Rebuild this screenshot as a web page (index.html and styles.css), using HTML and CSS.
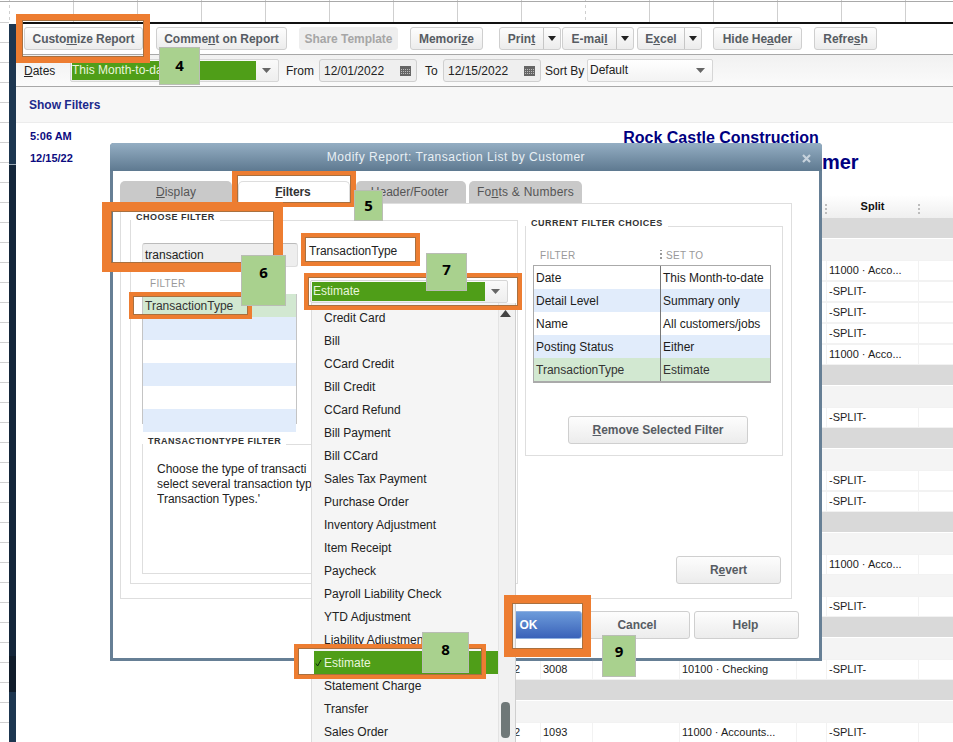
FILE: index.html
```html
<!DOCTYPE html>
<html lang="en">
<head>
<meta charset="utf-8">
<title>Modify Report: Transaction List by Customer</title>
<link rel="stylesheet" href="styles.css">
</head>
<body>
<div class="desktop">
  <div class="sheet-top"></div>
  <div class="workspace">
    <div class="sheet-left"><span class="sheet-mark"></span></div>
    <div class="rail">
      <span class="rail-a"></span><span class="rail-b"></span><span class="rail-c"></span><span class="rail-d"></span>
    </div>
    <main class="report-window">
      <div class="toolbar">
        <button class="btn w-customize">Custo<u>m</u>ize Report</button>
        <button class="btn w-comment">Comme<u>n</u>t on Report</button>
        <button class="btn btn-off w-share">Share Template</button>
        <button class="btn w-memorize">Memori<u>z</u>e</button>
        <div class="split w-print"><span class="split-label">Prin<u>t</u></span><span class="split-arrow"><svg width="8" height="5" viewBox="0 0 8 5"><path d="M0 0h8L4 5z" fill="#222"/></svg></span></div>
        <div class="split w-email"><span class="split-label">E-mai<u>l</u></span><span class="split-arrow"><svg width="8" height="5" viewBox="0 0 8 5"><path d="M0 0h8L4 5z" fill="#222"/></svg></span></div>
        <div class="split w-excel"><span class="split-label">E<u>x</u>cel</span><span class="split-arrow"><svg width="8" height="5" viewBox="0 0 8 5"><path d="M0 0h8L4 5z" fill="#222"/></svg></span></div>
        <button class="btn w-hide">Hide He<u>a</u>der</button>
        <button class="btn w-refresh">Refre<u>s</u>h</button>
      </div>
      <div class="datebar">
        <span class="lbl lbl-dates"><u>D</u>ates</span>
        <div class="select w-dates"><span class="select-value is-green">This Month-to-date</span><svg class="caret" width="9" height="5" viewBox="0 0 9 5"><path d="M0 0h9L4.500 5z" fill="#666"/></svg></div>
        <span class="lbl lbl-from">From</span>
        <div class="date">12/01/2022<svg class="cal" width="11" height="10" viewBox="0 0 11 10"><rect width="11" height="10" fill="#666"/><path d="M1 3h1v1H1zM3 3h1v1H3zM5 3h1v1H5zM7 3h1v1H7zM9 3h1v1H9zM1 5h1v1H1zM3 5h1v1H3zM5 5h1v1H5zM7 5h1v1H7zM9 5h1v1H9zM1 7h1v1H1zM3 7h1v1H3zM5 7h1v1H5zM7 7h1v1H7zM9 7h1v1H9z" fill="#bbb"/></svg></div>
        <span class="lbl lbl-to">To</span>
        <div class="date">12/15/2022<svg class="cal" width="11" height="10" viewBox="0 0 11 10"><rect width="11" height="10" fill="#666"/><path d="M1 3h1v1H1zM3 3h1v1H3zM5 3h1v1H5zM7 3h1v1H7zM9 3h1v1H9zM1 5h1v1H1zM3 5h1v1H3zM5 5h1v1H5zM7 5h1v1H7zM9 5h1v1H9zM1 7h1v1H1zM3 7h1v1H3zM5 7h1v1H5zM7 7h1v1H7zM9 7h1v1H9z" fill="#bbb"/></svg></div>
        <span class="lbl lbl-sort">Sort By</span>
        <div class="select w-sort"><span class="select-value">Default</span><svg class="caret" width="9" height="5" viewBox="0 0 9 5"><path d="M0 0h9L4.500 5z" fill="#666"/></svg></div>
      </div>
      <div class="filterbar">Show Filters</div>
      <section class="report">
        <div class="report-head">
          <div class="meta"><div>5:06 AM</div><div>12/15/22</div></div>
          <div class="report-title">
            <div class="company">Rock Castle Construction</div>
            <div class="title-name">Transaction List by Customer</div>
          </div>
        </div>
        <div class="rows">
          <div class="grid-row head"><span></span><span></span><span></span><span></span><span></span><span class="col-split">Split</span><span></span></div>
          <div class="band-gray"></div>
          <div class="band-light"></div>
          <div class="grid-row cells"><span></span><span></span><span></span><span></span><span></span><span>11000 · Acco...</span><span></span></div>
          <div class="grid-row cells"><span></span><span></span><span></span><span></span><span></span><span>-SPLIT-</span><span></span></div>
          <div class="grid-row cells"><span></span><span></span><span></span><span></span><span></span><span>-SPLIT-</span><span></span></div>
          <div class="grid-row cells"><span></span><span></span><span></span><span></span><span></span><span>-SPLIT-</span><span></span></div>
          <div class="grid-row cells"><span></span><span></span><span></span><span></span><span></span><span>11000 · Acco...</span><span></span></div>
          <div class="band-gray"></div>
          <div class="band-light"></div>
          <div class="grid-row cells"><span></span><span></span><span></span><span></span><span></span><span>-SPLIT-</span><span></span></div>
          <div class="band-gray"></div>
          <div class="band-light"></div>
          <div class="grid-row cells"><span></span><span></span><span></span><span></span><span></span><span>-SPLIT-</span><span></span></div>
          <div class="grid-row cells"><span></span><span></span><span></span><span></span><span></span><span>-SPLIT-</span><span></span></div>
          <div class="band-gray"></div>
          <div class="band-light"></div>
          <div class="grid-row cells"><span></span><span></span><span></span><span></span><span></span><span>11000 · Acco...</span><span></span></div>
          <div class="band-light"></div>
          <div class="grid-row cells"><span></span><span></span><span></span><span></span><span></span><span>-SPLIT-</span><span></span></div>
          <div class="band-gray"></div>
          <div class="band-light"></div>
          <div class="grid-row cells"><span class="col-date">2</span><span>3008</span><span></span><span>10100 · Checking</span><span></span><span>-SPLIT-</span><span></span></div>
          <div class="band-gray"></div>
          <div class="band-light"></div>
          <div class="grid-row cells"><span class="col-date">2</span><span>1093</span><span></span><span>11000 · Accounts...</span><span></span><span>-SPLIT-</span><span></span></div>
        </div>
      </section>
    </main>
  </div>

  <div class="dialog">
    <div class="dialog-title">
      <span class="dialog-title-text">Modify Report: Transaction List by Customer</span>
      <svg class="dialog-close" width="9" height="9" viewBox="0 0 9 9"><path d="M1 1l7 7M8 1L1 8" stroke="#c6d2dc" stroke-width="2.200"/></svg>
    </div>
    <div class="dialog-body">
      <div class="tabs">
        <div class="tab tab-display"><u>D</u>isplay</div>
        <div class="tab tab-filters"><u>F</u>ilters</div>
        <div class="tab tab-header">Header/Footer</div>
        <div class="tab tab-fonts">Fo<u>n</u>ts &amp; Numbers</div>
      </div>
      <div class="panel">
        <div class="group group-choose">
          <div class="legend">CHOOSE FILTER</div>
          <div class="choose-grid">
            <div class="choose-left">
              <div class="search">transaction</div>
              <div class="col-caption caption-filter">FILTER</div>
              <div class="filter-list">
                <div class="fl-row fl-sel">TransactionType</div>
                <div class="fl-row fl-blue"></div>
                <div class="fl-row"></div>
                <div class="fl-row fl-blue"></div>
                <div class="fl-row"></div>
                <div class="fl-row fl-blue"></div>
              </div>
            </div>
            <div class="choose-right">
              <div class="type-label">TransactionType</div>
              <div class="select w-type"><span class="select-value is-green">Estimate</span><svg class="caret" width="9" height="5" viewBox="0 0 9 5"><path d="M0 0h9L4.500 5z" fill="#666"/></svg></div>
            </div>
          </div>
          <div class="group group-help">
            <div class="legend">TRANSACTIONTYPE FILTER</div>
            <p class="help-text">Choose the type of transacti<br>select several transaction typ<br>Transaction Types.'</p>
          </div>
        </div>
        <div class="panel-right">
          <div class="group group-current">
            <div class="legend">CURRENT FILTER CHOICES</div>
            <div class="current-caption"><span class="col-caption cc-filter">FILTER</span><span class="col-caption cc-set">SET TO</span></div>
            <div class="current-table">
              <span>Date</span><span>This Month-to-date</span>
              <span class="ct-blue">Detail Level</span><span class="ct-blue">Summary only</span>
              <span>Name</span><span>All customers/jobs</span>
              <span class="ct-blue">Posting Status</span><span class="ct-blue">Either</span>
              <span class="ct-sel">TransactionType</span><span class="ct-sel">Estimate</span>
            </div>
            <button class="btn btn-tall w-remove"><u>R</u>emove Selected Filter</button>
          </div>
          <button class="btn btn-tall w-revert">R<u>e</u>vert</button>
        </div>
      </div>
      <div class="dialog-foot">
        <button class="btn btn-tall btn-primary w-ok">OK</button>
        <button class="btn btn-tall w-cancel">Cancel</button>
        <button class="btn btn-tall w-help">Help</button>
      </div>
    </div>
  </div>

  <div class="dropdown">
    <ul class="dropdown-list">
      <li>Credit Card</li>
      <li>Bill</li>
      <li>CCard Credit</li>
      <li>Bill Credit</li>
      <li>CCard Refund</li>
      <li>Bill Payment</li>
      <li>Bill CCard</li>
      <li>Sales Tax Payment</li>
      <li>Purchase Order</li>
      <li>Inventory Adjustment</li>
      <li>Item Receipt</li>
      <li>Paycheck</li>
      <li>Payroll Liability Check</li>
      <li>YTD Adjustment</li>
      <li>Liability Adjustment</li>
      <li class="dd-sel"><svg class="dd-check" width="7" height="8" viewBox="0 0 7 8"><path d="M1 4.500L2.600 7 6 1" fill="none" stroke="#10300a" stroke-width="1"/></svg>Estimate</li>
      <li>Statement Charge</li>
      <li>Transfer</li>
      <li>Sales Order</li>
    </ul>
    <div class="dd-scroll">
      <svg class="dd-up" width="11" height="7" viewBox="0 0 11 7"><path d="M0 7h11L5.500 0z" fill="#444"/></svg>
      <span class="dd-thumb"></span>
    </div>
  </div>

  <div class="callout c-customize"></div>
  <div class="callout c-filters"></div>
  <div class="callout c-choose"></div>
  <div class="callout c-label"></div>
  <div class="callout c-type"></div>
  <div class="callout c-row"></div>
  <div class="callout c-estimate"></div>
  <div class="callout c-ok"></div>

  <div class="step s4">4</div>
  <div class="step s5">5</div>
  <div class="step s6">6</div>
  <div class="step s7">7</div>
  <div class="step s8">8</div>
  <div class="step s9">9</div>
</div>
</body>
</html>
```

FILE: styles.css
```css
* { box-sizing: border-box; }
html, body { margin: 0; padding: 0; }
body { font-family: "Liberation Sans", Arial, sans-serif; font-size: 12px; color: #1c1c1c; background: #fff; }
u { text-decoration: underline; }

.desktop { position: relative; width: 953px; height: 742px; overflow: hidden; display: flex; flex-direction: column; }

/* spreadsheet behind the app */
.sheet-top {
  height: 22px; flex: none;
  background:
    repeating-linear-gradient(#fff 0 3px, transparent 3px 6px) 585px 2px / 1px 20px no-repeat,
    repeating-linear-gradient(#fff 0 3px, transparent 3px 6px) 9px 2px / 1px 20px no-repeat,
    linear-gradient(#a9a9a9, #a9a9a9) 0 1px / 100% 1px no-repeat,
    linear-gradient(90deg, #cfcfcf 1px, transparent 1px) 9px 0 / 64px 100%;
}
.workspace { flex: 1; display: flex; min-height: 0; }
.sheet-left {
  width: 9px; flex: none; padding-top: 175px;
  background: linear-gradient(#d0d0d0 1px, transparent 1px) 0 20px / 100% 20px;
}
.sheet-mark { display: block; width: 2px; height: 40px; margin-left: 10px; background: #9a9a9a; }
.rail { width: 7px; flex: none; margin-top: 2px; display: flex; flex-direction: column; background: #15253a; }
.rail-a { height: 141px; background: #1d3650; border-bottom: 1px solid #9aa7b3; }
.rail-b { flex: 1; background: #14263a; }
.rail-c { height: 36px; background: #101c2a; }
.rail-d { height: 50px; background: #1d3650; }

.report-window { flex: 1; min-width: 0; display: flex; flex-direction: column; border-top: 2px solid #111; background: #fff; }

/* toolbar */
.toolbar { height: 31px; flex: none; display: flex; align-items: flex-start; padding: 3px 0 0 8px; background: #fff; border-bottom: 1px solid #a8a8a8; }
.btn {
  height: 23px; padding: 0; border: 1px solid #cfcfcf; border-radius: 3px;
  background: linear-gradient(#fdfdfd, #ececec);
  font: bold 12px "Liberation Sans", Arial, sans-serif; letter-spacing: -.05px; color: #575c63; white-space: nowrap;
}
.btn-off { border-color: #eee; background: #eeeeee; color: #a6a6a6; }
.btn-tall { height: 28px; }
.w-customize { width: 119px; }
.w-comment { width: 131px; margin-left: 13px; }
.w-share { width: 99px; margin-left: 12px; }
.w-memorize { width: 73px; margin-left: 12px; }
.w-hide { width: 89px; margin-left: 11px; }
.w-refresh { width: 63px; margin-left: 12px; }
.split { height: 23px; display: flex; border: 1px solid #cfcfcf; border-radius: 3px; background: linear-gradient(#fdfdfd, #ececec); font-weight: bold; color: #575c63; }
.split-label { flex: 1; text-align: center; line-height: 22px; }
.split-arrow { width: 17px; border-left: 1px solid #c6c6c6; display: flex; align-items: center; justify-content: center; }
.w-print { width: 62px; margin-left: 16px; }
.w-email { width: 72px; margin-left: 1px; }
.w-excel { width: 65px; margin-left: 3px; }

/* date row */
.datebar { height: 32px; flex: none; display: flex; align-items: center; padding-left: 8px; background: linear-gradient(#f1f1f1, #fbfbfb); border-bottom: 1px solid #a8a8a8; }
.lbl { font-size: 12px; color: #222; white-space: nowrap; padding-top: 1px; }
.lbl-dates { width: 46px; }
.lbl-from { width: 33px; margin-left: 7px; }
.lbl-to { width: 18px; margin-left: 8px; }
.lbl-sort { width: 42px; margin-left: 4px; }
.select { height: 23px; display: flex; align-items: center; padding: 1px; border: 1px solid #d6d6d6; border-radius: 2px; background: linear-gradient(#fafafa, #eeeeee); }
.select-value { flex: 1; height: 100%; line-height: 18px; padding-left: 0; font-size: 12px; color: #222; white-space: nowrap; overflow: hidden; }
.is-green { background: #4f9e18; color: #e9f6dc; }
.caret { flex: none; margin: 0 6px; }
.w-dates { width: 209px; }
.w-sort { width: 126px; background: linear-gradient(#fff, #f3f3f3); }
.w-sort .select-value { padding-left: 1px; }
.w-type { width: 198px; }
.w-type .select-value { padding-left: 1px; }
.date { width: 98px; height: 23px; display: flex; align-items: center; justify-content: space-between; padding: 0 5px 0 4px; border: 1px solid #cfcfcf; border-radius: 3px; background: #efefef; color: #222; }

.filterbar { height: 36px; flex: none; display: flex; align-items: center; padding-left: 13px; background: #f7f7f7; border-bottom: 1px solid #ececec; font-weight: bold; color: #1c2a8c; }

/* report */
.report { flex: 1; min-height: 0; background: #fff; overflow: hidden; }
.report-head { height: 72px; display: flex; justify-content: space-between; padding: 2px 32px 0 14px; }
.meta { font-size: 11px; font-weight: bold; line-height: 22px; color: #0b0b80; }
.report-title { width: 400px; text-align: center; font-weight: bold; color: #000080; padding-top: 2px; white-space: nowrap; }
.company { font-size: 16px; line-height: 22px; }
.title-name { font-size: 20px; line-height: 26px; padding-right: 6px; }
.rows { margin-left: 384px; }
.grid-row { display: grid; grid-template-columns: 140px 51px 86px 116px 29px 91px 1fr; column-gap: 1px; }
.head { height: 23px; background: linear-gradient(#fff, #efefef); font-size: 11px; font-weight: bold; color: #111; }
.col-split {
  margin: 0 -2px; text-align: center; line-height: 23px;
  background:
    repeating-linear-gradient(#bdbdbd 0 2px, transparent 2px 4px) left 9px / 2px 11px no-repeat,
    repeating-linear-gradient(#bdbdbd 0 2px, transparent 2px 4px) right 9px / 2px 11px no-repeat;
}
.band-gray { height: 21px; background: #d9d9d9; border-bottom: 1px solid #fff; }
.band-light { height: 21px; background: #f4f4f4; }
.cells { height: 21px; padding: 1px 0 1px; background: #f2f2f2; font-size: 11px; line-height: 19px; color: #1c1c1c; }
.cells span { background: #fff; padding-left: 2px; white-space: nowrap; overflow: hidden; }
.cells .col-date { text-align: right; padding-right: 20px; }

/* dialog window */
.dialog { position: absolute; z-index: 1; left: 110px; top: 143px; width: 712px; height: 518px; display: flex; flex-direction: column; border: 3px solid #667f95; border-top: 0; border-radius: 4px 4px 0 0; background: #fff; }
.dialog-title { height: 28px; flex: none; margin: 0 -3px; display: flex; align-items: center; justify-content: center; padding-right: 20px; position: relative; border-radius: 4px 4px 0 0; background: linear-gradient(#94aec3, #5e7990); color: #e8eff4; font-size: 12px; letter-spacing: .5px; }
.dialog-close { position: absolute; right: 11px; top: 11px; }
.dialog-body { flex: 1; padding: 10px 0 0 7px; }
.tabs { display: flex; height: 22px; }
.tab { height: 22px; line-height: 22px; text-align: center; border-radius: 5px 5px 0 0; background: #c9c9c9; color: #555; font-size: 12px; letter-spacing: .1px; }
.tab-display { width: 112px; }
.tab-filters { width: 112px; margin-left: 6px; padding-right: 2px; background: #fff; border: 1px solid #ddd; border-bottom: 0; font-weight: bold; color: #333; line-height: 21px; letter-spacing: -.1px; }
.tab-header { width: 110px; margin-left: 6px; padding-right: 3px; letter-spacing: 0; }
.tab-fonts { width: 113px; margin-left: 3px; letter-spacing: .25px; }
.panel { width: 672px; height: 396px; display: flex; align-items: flex-start; padding: 16px 0 0 9px; border: 1px solid #dedede; }
.group { border: 1px solid #dedede; background: #fff; }
.legend { display: table; margin-top: -9px; padding: 0 5px; height: 11px; line-height: 11px; font-size: 9px; font-weight: bold; letter-spacing: .5px; color: #333; background: #fff; white-space: nowrap; }
.group-choose { width: 388px; height: 364px; padding: 0 0 0 11px; }
.group-choose > .legend { margin-left: -11px; }
.choose-grid { display: flex; gap: 12px; }
.choose-left { width: 156px; flex: none; padding-top: 20px; }
.search { height: 24px; line-height: 23px; padding-left: 2px; border: 1px solid #ddd; border-top-color: #bbb; border-radius: 3px; background: #eeeeee; color: #222; }
.col-caption { font-size: 10px; line-height: 12px; color: #999; font-weight: normal; letter-spacing: .3px; }
.caption-filter { margin: 11px 0 4px 8px; }
.filter-list { width: 155px; height: 130px; border: 1px solid #c4c4c4; border-top: 0; }
.fl-row { height: 23px; line-height: 25px; padding-left: 2px; }
.fl-sel { background: #d2e8d1; color: #333; }
.fl-blue { background: #e1ecfb; }
.choose-right { width: 198px; flex: none; padding-top: 21px; }
.type-label { line-height: 15px; margin-left: -1px; color: #222; }
.choose-right .select { margin-top: 21px; }
.group-help { width: 365px; height: 130px; margin-top: 20px; }
.help-text { width: 154px; margin: 15px 0 0 14px; line-height: 15px; color: #222; white-space: nowrap; overflow: hidden; }
.panel-right { width: 258px; margin-left: 7px; margin-top: 6px; display: flex; flex-direction: column; align-items: flex-end; }
.group-current { width: 258px; height: 230px; padding-left: 7px; }
.group-current > .legend { margin-left: -7px; }
.current-caption { display: flex; margin-top: 21px; height: 12px; }
.cc-filter { width: 127px; padding-left: 7px; }
.cc-set { padding-left: 6px; background: repeating-linear-gradient(#999 0 2px, transparent 2px 4px) left -1px / 2px 11px no-repeat; }
.current-table { width: 238px; margin-top: 3px; display: grid; grid-template-columns: 126px 1fr; border: 1px solid #aaa; border-bottom-width: 2px; }
.current-table span { height: 23px; line-height: 25px; padding-left: 2px; color: #1c1c1c; white-space: nowrap; }
.current-table span:nth-child(even) { border-left: 1px solid #777; }
.ct-blue { background: #e1ecfb; }
.current-table .ct-sel { background: #d2e8d1; color: #333; }
.w-remove { display: block; width: 180px; margin: 33px 0 0 35px; }
.w-revert { width: 105px; margin: 100px 2px 0 0; }
.dialog-foot { display: flex; justify-content: flex-end; gap: 4px; margin-top: 12px; padding-right: 20px; }
.dialog-foot .btn { padding-right: 2px; }
.w-ok { width: 105px; }
.w-cancel { width: 104px; }
.w-help { width: 105px; }
.btn-primary { border-color: #8fb0e0; background: linear-gradient(#6c9bda, #3a62b9); color: #fff; }

/* open drop-down list */
.dropdown { position: absolute; z-index: 2; left: 311px; top: 303px; width: 204px; height: 439px; display: flex; overflow: hidden; background: #f5f5f5; border-left: 1px solid #dcdcdc; box-shadow: 1px 0 0 #cfcfcf; }
.dropdown-list { width: 186px; flex: none; margin: 0; padding: 3px 0 0; list-style: none; }
.dropdown-list li { height: 23px; line-height: 25px; padding-left: 12px; color: #222; white-space: nowrap; position: relative; }
.dropdown-list .dd-sel { margin-left: 2px; padding-left: 10px; background: #4f9e18; color: #e9f6dc; }
.dd-check { position: absolute; left: 1px; top: 8px; }
.dd-scroll { flex: 1; display: flex; flex-direction: column; align-items: flex-start; border-left: 1px solid #e3e3e3; background: #f1f1f1; padding: 7px 0 4px 2px; }
.dd-up { margin-left: -1px; }
.dd-thumb { width: 9px; height: 36px; margin-top: auto; border-radius: 4px; background: #6f7878; }

/* annotations */
.callout { position: absolute; z-index: 3; border: 0 solid #ed7d31; box-shadow: inset 0 0 0 1px #a9703f; }
.c-customize { left: 16px; top: 14px; width: 134px; height: 49px; border-width: 6px; }
.c-filters { left: 232px; top: 171px; width: 124px; height: 36px; border-width: 4px 5px; }
.c-choose { left: 102px; top: 202px; width: 181px; height: 70px; border-width: 9px; }
.c-label { left: 301px; top: 233px; width: 119px; height: 33px; border-width: 4px; }
.c-type { left: 304px; top: 273px; width: 218px; height: 37px; border-width: 4px; }
.c-row { left: 129px; top: 292px; width: 123px; height: 27px; border-width: 4px; }
.c-estimate { left: 294px; top: 644px; width: 192px; height: 35px; border-width: 4px; background: linear-gradient(90deg, #fff 16px, transparent 16px); }
.c-ok { left: 504px; top: 595px; width: 87px; height: 62px; border-width: 8px; }
.step { position: absolute; z-index: 4; display: flex; justify-content: center; padding-top: 6px; border: 1px solid #b9bdb4; background: #a9d18e; color: #000; font: bold 15px "Open Sans", "Liberation Sans", sans-serif; line-height: 22px; }
.s4 { left: 159px; top: 47px; width: 41px; height: 38px; }
.s5 { left: 354px; top: 190px; width: 29px; height: 31px; padding-top: 3px; }
.s6 { left: 241px; top: 255px; width: 45px; height: 51px; padding-top: 5px; }
.s7 { left: 426px; top: 253px; width: 41px; height: 38px; padding-top: 4px; }
.s8 { left: 422px; top: 632px; width: 47px; height: 41px; padding-top: 5px; }
.s9 { left: 602px; top: 635px; width: 34px; height: 42px; padding-top: 4px; }
```
